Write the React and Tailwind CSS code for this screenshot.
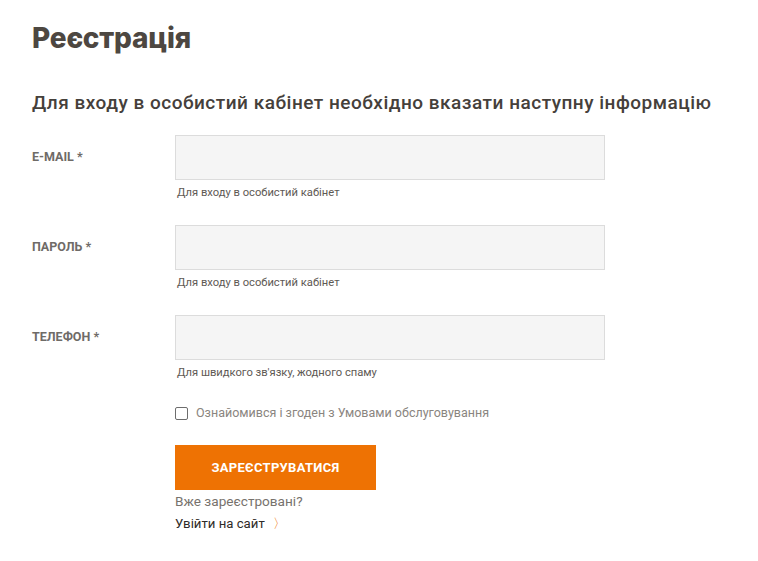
export default function App() {
  const fields = [
    { label: "E-MAIL *", hint: "Для входу в особистий кабінет", type: "email" },
    { label: "ПАРОЛЬ *", hint: "Для входу в особистий кабінет", type: "password" },
    { label: "ТЕЛЕФОН *", hint: "Для швидкого зв'язку, жодного спаму", type: "tel" },
  ];

  return (
    <div className="min-h-[561px] w-[758px] bg-white pl-8 pt-[18px] font-['Roboto',sans-serif] text-[#4a4540]">
      <h1 className="font-['Inter',sans-serif] text-[28px] font-extrabold leading-[40px] tracking-[-0.2px] text-[#4d4741]">
        Реєстрація
      </h1>

      <h2 className="mt-[33px] text-[19px] font-medium leading-[24px] tracking-[0.5px] text-[#45403b]">
        Для входу в особистий кабінет необхідно вказати наступну інформацію
      </h2>

      <form className="mt-[20px] flex flex-col">
        {fields.map((f) => (
          <div key={f.label} className="flex h-[90px]">
            <label className="w-[143px] pt-[14px] text-[12.5px] font-bold leading-[16px] text-[#6f6b67]">
              {f.label}
            </label>
            <div className="flex flex-col">
              <input
                type={f.type}
                className="h-[45px] w-[430px] border border-[#dcdcdc] bg-[#f5f5f5] px-3 outline-none"
              />
              <span className="mt-[5px] pl-[2px] text-[11.2px] leading-[15px] text-[#5e5954]">
                {f.hint}
              </span>
            </div>
          </div>
        ))}

        <div className="ml-[143px] flex flex-col">
          <label className="flex items-center gap-[8px] text-[12.5px] leading-[16px] text-[#8a8580]">
            <span className="h-[13px] w-[13px] rounded-[2px] border border-[#6d6d6d] bg-white" />
            Ознайомився і згоден з Умовами обслуговування
          </label>

          <button
            type="button"
            className="mt-[24px] h-[45px] w-[201px] bg-[#ee7203] text-[13px] font-bold tracking-[0.3px] text-white"
          >
            ЗАРЕЄСТРУВАТИСЯ
          </button>

          <p className="mt-[1px] text-[13.6px] leading-[20px] text-[#77726d]">Вже зареєстровані?</p>
          <a className="mt-[3px] flex items-center text-[13.2px] leading-[20px] text-[#2f2b28]">
            Увійти на сайт
            <span className="ml-[8px] text-[13px] text-[#ee7203]">〉</span>
          </a>
        </div>
      </form>
    </div>
  );
}
